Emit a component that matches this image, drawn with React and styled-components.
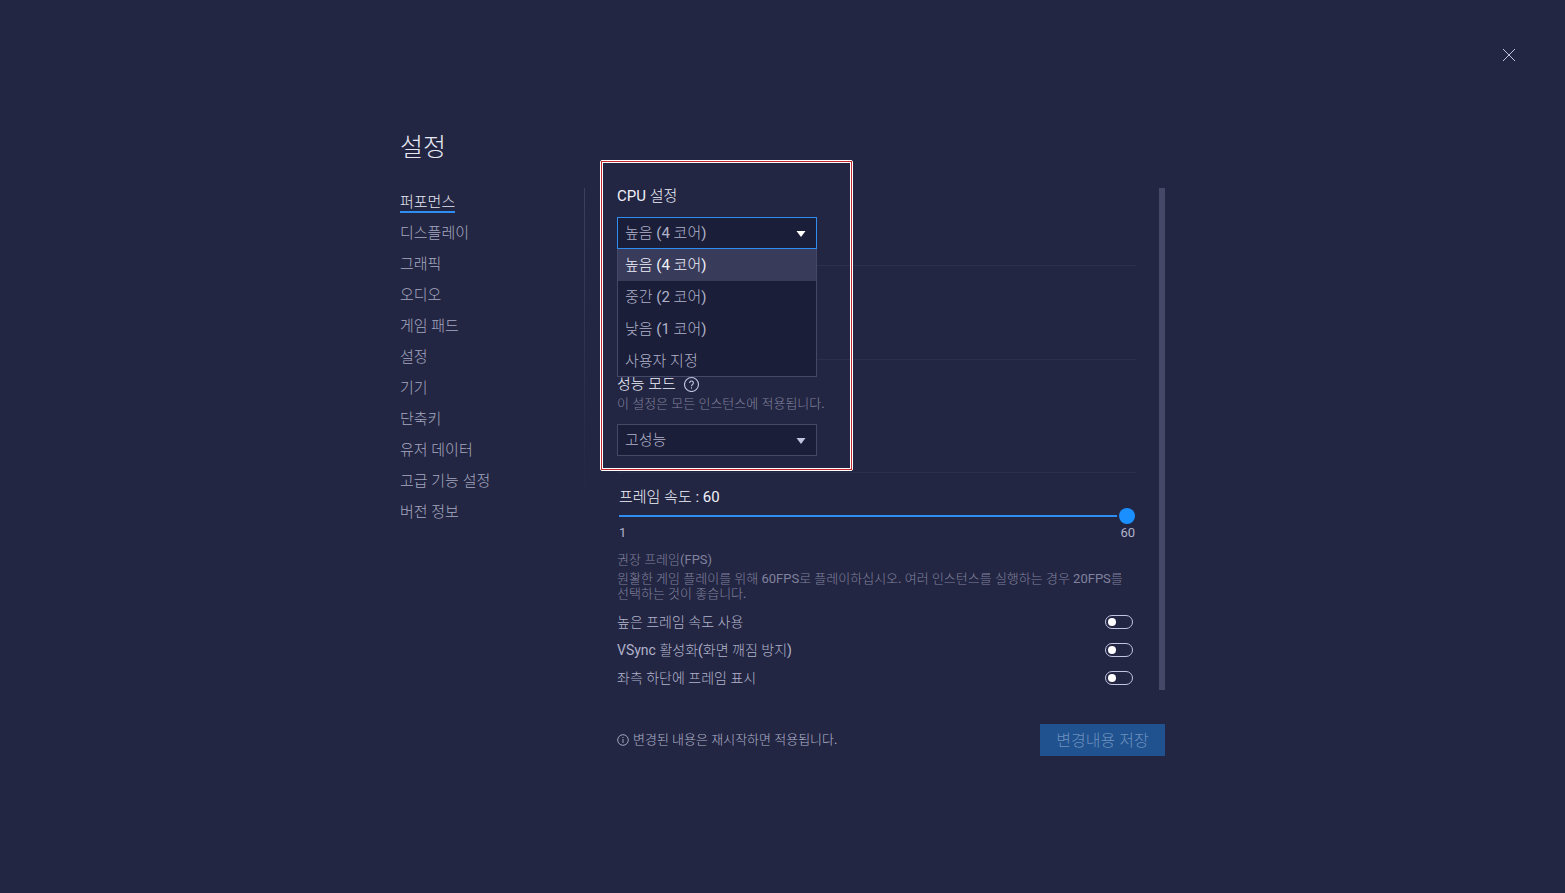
import { useState } from "react";
import styled, { createGlobalStyle } from "styled-components";

const GlobalStyle = createGlobalStyle`
  * {
    box-sizing: border-box;
  }
  body {
    margin: 0;
    background: #232642;
    color: #b0b2ca;
    font-family: Roboto, "Noto Sans CJK KR Light", "Noto Sans CJK KR", sans-serif;
    font-size: 15px;
    font-weight: 400;
    word-break: keep-all;
  }
  button, select, input {
    font-family: inherit;
    font-weight: inherit;
  }
`;

const Header = styled.header`
  display: flex;
  justify-content: flex-end;
  padding: 39px 40px 0;
`;

const CloseButton = styled.button`
  display: flex;
  align-items: center;
  justify-content: center;
  width: 32px;
  height: 32px;
  padding: 0;
  border: 0;
  background: none;
  color: #c3c5e0;
`;

const Main = styled.main`
  max-width: 765px;
  margin: 59px auto 0;
`;

const Title = styled.h1`
  margin: 0 0 22px;
  color: #e6e7f2;
  font-size: 25px;
  font-weight: 300;
  line-height: 36px;
`;

const Body = styled.div`
  display: flex;
`;

const Nav = styled.nav`
  display: flex;
  flex-direction: column;
  align-items: flex-start;
  gap: 8px;
  flex: 0 0 185px;
  padding-top: 2px;
  background: linear-gradient(#3c3f5e, #232642) right top / 1px 320px no-repeat;
`;

const NavLink = styled.a`
  padding-top: 4px;
  border-bottom: 2px solid ${({ $active }) => ($active ? "#2f8cf0" : "transparent")};
  color: ${({ $active }) => ($active ? "#e6e7f2" : "#a6a8c0")};
  line-height: 17px;
  text-decoration: none;
`;

const Content = styled.div`
  flex: 1;
  min-width: 0;
`;

const Panel = styled.div`
  position: relative;
  display: flex;
  justify-content: space-between;
  gap: 23px;
  padding-left: 32px;
`;

const Sections = styled.div`
  flex: 1;
  padding-bottom: 2px;
`;

const ScrollThumb = styled.div`
  width: 6px;
  background: #464867;
`;

const Section = styled.section`
  min-height: ${({ $minHeight }) => $minHeight || "0"};
  padding: 16px 0;
  border-bottom: 1px solid #2d304c;

  &:first-child {
    padding-top: 0;
  }
`;

const FrameRate = styled.section`
  padding-top: 16px;
`;

const Label = styled.label`
  display: block;
  color: #f0f1fa;
  font-size: 15px;
  line-height: 16px;
`;

const LabelRow = styled.div`
  display: flex;
  align-items: center;
  gap: 8px;
  height: 16px;
`;

const Hint = styled.p`
  margin: 4px 0 0;
  color: #80829f;
  font-size: 13px;
  line-height: 15px;
`;

const SelectWrap = styled.div`
  position: relative;
  width: 200px;
  margin-top: 13px;
`;

const Select = styled.select`
  appearance: none;
  display: block;
  width: 100%;
  height: 32px;
  padding: 0 7px;
  border: 1px solid ${({ $open }) => ($open ? "#2f8cf0" : "#464867")};
  border-radius: 0;
  outline: 0;
  background: #1b1e38;
  color: #b0b2ca;
  font-size: 15px;
`;

const Caret = styled.svg`
  position: absolute;
  top: 14px;
  right: 11px;
  pointer-events: none;
`;

const Menu = styled.ul`
  position: absolute;
  top: 100%;
  left: 0;
  right: 0;
  z-index: 1;
  margin: 0;
  padding: 0;
  border: 1px solid #464867;
  border-top: 0;
  background: #1b1e38;
  list-style: none;
`;

const MenuItem = styled.li`
  height: 32px;
  padding: 0 7px;
  background: ${({ $active }) => ($active ? "#393b5a" : "transparent")};
  color: ${({ $active }) => ($active ? "#f0f1fa" : "#b0b2ca")};
  line-height: 32px;

  &:last-child {
    height: 31px;
  }
`;

const Highlight = styled.div`
  position: absolute;
  top: -28px;
  left: 15px;
  z-index: 2;
  width: 253px;
  height: 311px;
  border: 1px solid #fff;
  border-radius: 2px;
  pointer-events: none;

  &::before {
    content: "";
    position: absolute;
    inset: 0;
    border: 1px solid #c4282d;
  }

  &::after {
    content: "";
    position: absolute;
    inset: 1px;
    border: 1px solid #fff;
  }
`;

const SliderBlock = styled.div`
  padding: 0 1px 0 2px;
`;

const Slider = styled.input`
  appearance: none;
  display: block;
  width: 100%;
  height: 16px;
  margin: 3px 0 1px;
  background: linear-gradient(#2f8cf0, #2f8cf0) center / 100% 2px no-repeat;

  &::-webkit-slider-thumb {
    appearance: none;
    width: 16px;
    height: 16px;
    border-radius: 50%;
    background: #1a8fff;
    box-shadow: 0 0 0 2px #232642;
  }
`;

const Range = styled.div`
  display: flex;
  justify-content: space-between;
  margin-bottom: 11px;
  font-size: 13px;
  line-height: 16px;
`;

const Toggles = styled.div`
  display: flex;
  flex-direction: column;
  gap: 8px;
  margin-top: 11px;
`;

const ToggleRow = styled.label`
  display: flex;
  align-items: center;
  justify-content: space-between;
  padding-right: 3px;
  font-size: 14px;
  line-height: 20px;
`;

const Switch = styled.input`
  appearance: none;
  display: flex;
  align-items: center;
  width: 28px;
  height: 14px;
  margin: 0;
  padding: 0 2px;
  border: 1px solid #c3c5e0;
  border-radius: 7px;

  &::before {
    content: "";
    width: 8px;
    height: 8px;
    border-radius: 50%;
    background: #fff;
  }

  &:checked {
    justify-content: flex-end;
    background: #1a8fff;
  }
`;

const Footer = styled.footer`
  display: flex;
  align-items: center;
  justify-content: space-between;
  margin-top: 34px;
  padding-left: 32px;
`;

const Note = styled.p`
  display: flex;
  align-items: center;
  gap: 4px;
  margin: 0;
  font-size: 13px;
  line-height: 16px;
`;

const SaveButton = styled.button`
  min-width: 125px;
  height: 32px;
  padding: 0 16px 2px;
  border: 0;
  background: #1f528f;
  color: #6c90be;
  font-size: 16px;
`;

const menuItems = [
  "퍼포먼스",
  "디스플레이",
  "그래픽",
  "오디오",
  "게임 패드",
  "설정",
  "기기",
  "단축키",
  "유저 데이터",
  "고급 기능 설정",
  "버전 정보",
];

const cpuOptions = ["높음 (4 코어)", "중간 (2 코어)", "낮음 (1 코어)", "사용자 지정"];

const toggles = [
  { id: "high-fps", label: "높은 프레임 속도 사용" },
  { id: "vsync", label: "VSync 활성화(화면 깨짐 방지)" },
  { id: "show-fps", label: "좌측 하단에 프레임 표시" },
];

const CloseIcon = () => (
  <svg width="12" height="12" viewBox="0 0 12 12" fill="none" stroke="currentColor">
    <path d="M0 0l12 12M12 0L0 12" />
  </svg>
);

const HelpIcon = () => (
  <svg width="16" height="16" viewBox="0 0 16 16" fill="none" stroke="#c3c5e0" strokeWidth="1.1">
    <circle cx="7.5" cy="8.5" r="7" />
    <path d="M5.6 6.9a1.9 1.9 0 1 1 2.900 1.600c-.7.45-1 .8-1 1.700" />
    <path d="M7.5 11.300v1.300" />
  </svg>
);

const InfoIcon = () => (
  <svg width="12" height="12" viewBox="0 0 12 12" fill="none" stroke="#b0b2ca" strokeWidth="0.9">
    <circle cx="6" cy="6" r="5.3" />
    <path d="M6 5v4M6 3v1" />
  </svg>
);

const Dropdown = ({ id, options, value, onChange, open }) => (
  <SelectWrap>
    <Select id={id} value={value} onChange={(e) => onChange(e.target.value)} $open={open}>
      {options.map((option) => (
        <option key={option}>{option}</option>
      ))}
    </Select>
    <Caret width="10" height="6" viewBox="0 0 10 6" fill={open ? "#fff" : "#c3c5e0"}>
      <path d="M0.5 0h9L5 6z" />
    </Caret>
    {open && (
      <Menu role="listbox">
        {options.map((option) => (
          <MenuItem
            key={option}
            role="option"
            aria-selected={option === value}
            $active={option === value}
            onClick={() => onChange(option)}
          >
            {option}
          </MenuItem>
        ))}
      </Menu>
    )}
  </SelectWrap>
);

const App = () => {
  const [cpu, setCpu] = useState(cpuOptions[0]);
  const [mode, setMode] = useState("고성능");
  const [fps, setFps] = useState(60);

  return (
    <>
      <GlobalStyle />
      <Header>
        <CloseButton type="button" aria-label="닫기">
          <CloseIcon />
        </CloseButton>
      </Header>
      <Main>
        <Title>설정</Title>
        <Body>
          <Nav>
            {menuItems.map((item, index) => (
              <NavLink key={item} href="#" $active={index === 0}>
                {item}
              </NavLink>
            ))}
          </Nav>
          <Content>
            <Panel>
              <Sections>
                <Section>
                  <Label htmlFor="cpu">CPU 설정</Label>
                  <Dropdown id="cpu" options={cpuOptions} value={cpu} onChange={setCpu} open />
                </Section>
                <Section $minHeight="94px" />
                <Section>
                  <LabelRow>
                    <Label htmlFor="mode">성능 모드</Label>
                    <HelpIcon />
                  </LabelRow>
                  <Hint>이 설정은 모든 인스턴스에 적용됩니다.</Hint>
                  <Dropdown id="mode" options={["고성능"]} value={mode} onChange={setMode} />
                </Section>
                <FrameRate>
                  <SliderBlock>
                    <Label htmlFor="fps">프레임 속도 : {fps}</Label>
                    <Slider
                      id="fps"
                      type="range"
                      min="1"
                      max="60"
                      value={fps}
                      onChange={(e) => setFps(Number(e.target.value))}
                    />
                    <Range>
                      <span>1</span>
                      <span>60</span>
                    </Range>
                  </SliderBlock>
                  <Hint>권장 프레임(FPS)</Hint>
                  <Hint>
                    원활한 게임 플레이를 위해 60FPS로 플레이하십시오. 여러 인스턴스를 실행하는 경우 20FPS를
                    선택하는 것이 좋습니다.
                  </Hint>
                  <Toggles>
                    {toggles.map(({ id, label }) => (
                      <ToggleRow key={id} htmlFor={id}>
                        {label}
                        <Switch id={id} type="checkbox" />
                      </ToggleRow>
                    ))}
                  </Toggles>
                </FrameRate>
              </Sections>
              <ScrollThumb />
              <Highlight />
            </Panel>
            <Footer>
              <Note>
                <InfoIcon />
                변경된 내용은 재시작하면 적용됩니다.
              </Note>
              <SaveButton type="button" disabled>변경내용 저장</SaveButton>
            </Footer>
          </Content>
        </Body>
      </Main>
    </>
  );
};

export default App;
